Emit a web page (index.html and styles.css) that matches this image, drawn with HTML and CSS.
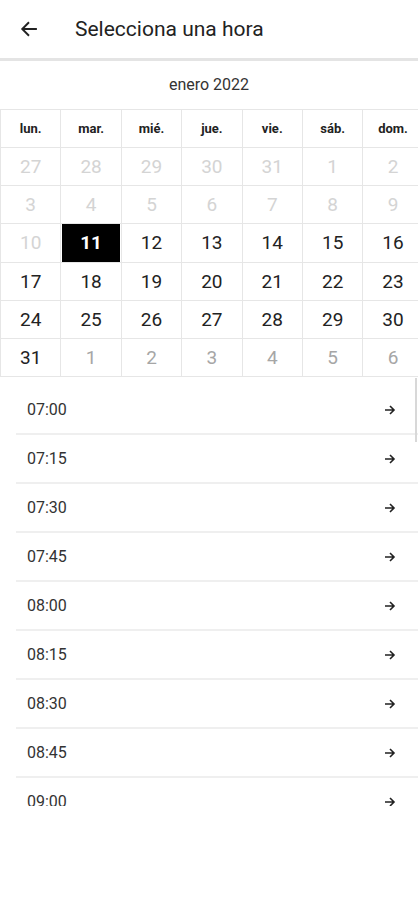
FILE: index.html
```html
<!DOCTYPE html>
<html lang="es">
<head>
    <meta charset="UTF-8">
    <meta name="viewport" content="width=device-width, initial-scale=1">
    <title>Selecciona una hora</title>
    <link rel="stylesheet" href="styles.css">
</head>
<body>
    <header class="topbar">
        <button class="back" aria-label="Volver">
            <svg width="18" height="18" viewBox="0 0 16 16">
                <path d="M15 8H2M8 2L2 8l6 6" fill="none" stroke="#222" stroke-width="1.7"/>
            </svg>
        </button>
        <h1 class="title">Selecciona una hora</h1>
    </header>

    <div class="month">enero 2022</div>

    <div class="calendar">
        <div class="cell head">lun.</div>
        <div class="cell head">mar.</div>
        <div class="cell head">mié.</div>
        <div class="cell head">jue.</div>
        <div class="cell head">vie.</div>
        <div class="cell head">sáb.</div>
        <div class="cell head">dom.</div>

        <div class="cell past">27</div>
        <div class="cell past">28</div>
        <div class="cell past">29</div>
        <div class="cell past">30</div>
        <div class="cell past">31</div>
        <div class="cell past">1</div>
        <div class="cell past">2</div>

        <div class="cell past">3</div>
        <div class="cell past">4</div>
        <div class="cell past">5</div>
        <div class="cell past">6</div>
        <div class="cell past">7</div>
        <div class="cell past">8</div>
        <div class="cell past">9</div>

        <div class="cell past">10</div>
        <div class="cell"><span class="selected">11</span></div>
        <div class="cell">12</div>
        <div class="cell">13</div>
        <div class="cell">14</div>
        <div class="cell">15</div>
        <div class="cell">16</div>

        <div class="cell">17</div>
        <div class="cell">18</div>
        <div class="cell">19</div>
        <div class="cell">20</div>
        <div class="cell">21</div>
        <div class="cell">22</div>
        <div class="cell">23</div>

        <div class="cell">24</div>
        <div class="cell">25</div>
        <div class="cell">26</div>
        <div class="cell">27</div>
        <div class="cell">28</div>
        <div class="cell">29</div>
        <div class="cell">30</div>

        <div class="cell">31</div>
        <div class="cell next">1</div>
        <div class="cell next">2</div>
        <div class="cell next">3</div>
        <div class="cell next">4</div>
        <div class="cell next">5</div>
        <div class="cell next">6</div>
    </div>

    <div class="slots">
        <div class="scrollbar"></div>
        <ul class="slot-list" id="slots"></ul>
    </div>

    <script>
        const times = ["07:00", "07:15", "07:30", "07:45", "08:00", "08:15", "08:30", "08:45", "09:00"]
        let html = ""
        for (const t of times) {
            html += '<li class="slot"><span>' + t + '</span>' +
                '<svg width="12" height="12" viewBox="0 0 12 12">' +
                '<path d="M1 6h9M6 2l4 4-4 4" fill="none" stroke="#222" stroke-width="1.6"/></svg></li>'
        }
        document.getElementById("slots").innerHTML = html
    </script>
</body>
</html>
```

FILE: styles.css
```css
body {
    font-family: Roboto, 'Noto Sans', sans-serif;
    margin: 0;
    background-color: white;
    color: #222;
    overflow: hidden;
}

.topbar {
    display: flex;
    align-items: center;
    height: 58px;
    border-bottom: 3px solid #e4e4e4;
}

.back {
    display: flex;
    align-items: center;
    justify-content: center;
    width: 18px;
    height: 18px;
    margin-left: 20px;
    padding: 0;
    border: none;
    background: none;
}

.title {
    margin: 0 0 0 37px;
    font-size: 21px;
    font-weight: 400;
    color: #222;
}

.month {
    height: 48px;
    line-height: 47px;
    text-align: center;
    font-size: 16px;
    color: #333;
}

.calendar {
    display: grid;
    grid-template-columns: repeat(7, 60.4px);
    grid-template-rows: 38px;
    grid-auto-rows: 38.2px;
    width: 423px;
    border-top: 1px solid #e6e6e6;
    border-left: 1px solid #e6e6e6;
}

.cell {
    display: flex;
    align-items: center;
    justify-content: center;
    border-right: 1px solid #e6e6e6;
    border-bottom: 1px solid #e6e6e6;
    font-size: 19px;
    color: #222;
}

.cell.head {
    font-size: 13px;
    font-weight: 700;
    color: #222;
}

.cell.past {
    color: #d4d4d4;
}

.cell.next {
    color: #a6a6a6;
}

.selected {
    display: flex;
    align-items: center;
    justify-content: center;
    width: 100%;
    height: 100%;
    margin: 1px;
    background-color: black;
    color: white;
    font-weight: 700;
}

.slots {
    position: relative;
    height: 429px;
    overflow: hidden;
}

.scrollbar {
    position: absolute;
    top: 1px;
    right: 1px;
    width: 2px;
    height: 64px;
    background-color: #d8d8d8;
}

.slot-list {
    list-style: none;
    margin: 0 0 0 16px;
    padding: 9px 0 0;
}

.slot {
    display: flex;
    align-items: center;
    justify-content: space-between;
    height: 47px;
    padding: 0 22px 0 11px;
    border-bottom: 2px solid #efefef;
    font-size: 16px;
    color: #333;
}
```
